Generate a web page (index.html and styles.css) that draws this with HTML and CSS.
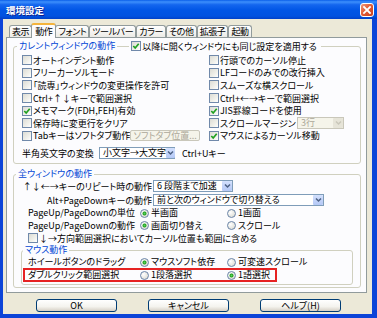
FILE: index.html
```html
<!DOCTYPE html>
<html lang="ja">

<head>
    <meta charset="UTF-8">
    <title>環境設定</title>
    <link rel="stylesheet" href="styles.css">
</head>

<body>
    <div class="window">
        <div class="titlebar">
            <span class="title">環境設定</span>
            <span class="close">
                <svg width="12" height="12" viewBox="0 0 12 12">
                    <path d="M3 3 L9 9 M9 3 L3 9" stroke="#fff" stroke-width="1.8" stroke-linecap="square" />
                </svg>
            </span>
        </div>

        <div class="frame">
            <!-- タブ -->
            <div class="tabs">
                <span class="tab">表示</span>
                <span class="tab active">動作</span>
                <span class="tab">フォント</span>
                <span class="tab">ツールバー</span>
                <span class="tab">カラー</span>
                <span class="tab">その他</span>
                <span class="tab">拡張子</span>
                <span class="tab">起動</span>
            </div>

            <div class="panel">
                <!-- カレントウィンドウの動作 -->
                <fieldset class="group current">
                    <legend>
                        <span>カレントウィンドウの動作</span>
                        <span class="legend-line"></span>
                        <label class="check legend-check"><span class="box on"><svg viewBox="0 0 8 8"><polyline points="1.3,4 3.2,6 6.7,1.8" /></svg></span>以降に開くウィンドウにも同じ設定を適用する</label>
                    </legend>

                    <div class="opts">
                        <label class="check"><span class="box"></span>オートインデント動作</label>
                        <label class="check"><span class="box"></span>行頭でのカーソル停止</label>

                        <label class="check"><span class="box"></span>フリーカーソルモード</label>
                        <label class="check"><span class="box"></span>LFコードのみでの改行挿入</label>

                        <label class="check"><span class="box"></span>「読専」ウィンドウの変更操作を許可</label>
                        <label class="check"><span class="box"></span>スムーズな横スクロール</label>

                        <label class="check"><span class="box"></span>Ctrl+↑↓キーで範囲選択</label>
                        <label class="check"><span class="box"></span>Ctrl+←→キーで範囲選択</label>

                        <label class="check"><span class="box on"><svg viewBox="0 0 8 8"><polyline points="1.3,4 3.2,6 6.7,1.8" /></svg></span>メモマーク(FDH,FEH)有効</label>
                        <label class="check"><span class="box on"><svg viewBox="0 0 8 8"><polyline points="1.3,4 3.2,6 6.7,1.8" /></svg></span>JIS罫線コードを使用</label>

                        <label class="check"><span class="box"></span>保存時に変更行をクリア</label>
                        <div class="cell">
                            <label class="check"><span class="box"></span>スクロールマージン</label>
                            <span class="select disabled margin-sel">3行<span class="arrow"><svg viewBox="0 0 9 8"><polyline points="2,2.5 4.5,5 7,2.5" /></svg></span></span>
                        </div>

                        <div class="cell">
                            <label class="check"><span class="box"></span>Tabキーはソフトタブ動作</label>
                            <span class="btn-small">ソフトタブ位置...</span>
                        </div>
                        <label class="check"><span class="box on"><svg viewBox="0 0 8 8"><polyline points="1.3,4 3.2,6 6.7,1.8" /></svg></span>マウスによるカーソル移動</label>
                    </div>

                    <div class="conv-row">
                        <span class="conv-label">半角英文字の変換</span>
                        <span class="select conv-sel">小文字→大文字<span class="arrow"><svg viewBox="0 0 9 8"><polyline points="2,2.5 4.5,5 7,2.5" /></svg></span></span>
                        <span class="conv-key">Ctrl+Uキー</span>
                    </div>
                </fieldset>

                <!-- 全ウィンドウの動作 -->
                <fieldset class="group all">
                    <legend>全ウィンドウの動作</legend>

                    <div class="kv">
                        <span class="kv-label">↑↓←→キーのリピート時の動作</span>
                        <span class="select repeat-sel">6 段階まで加速<span class="arrow"><svg viewBox="0 0 9 8"><polyline points="2,2.5 4.5,5 7,2.5" /></svg></span></span>

                        <span class="kv-label">Alt+PageDownキーの動作</span>
                        <span class="select alt-sel">前と次のウィンドウで切り替える<span class="arrow"><svg viewBox="0 0 9 8"><polyline points="2,2.5 4.5,5 7,2.5" /></svg></span></span>
                    </div>

                    <div class="radios indent">
                        <span>PageUp/PageDownの単位</span>
                        <label class="opt"><span class="radio on"></span>半画面</label>
                        <label class="opt"><span class="radio"></span>1画面</label>

                        <span>PageUp/PageDownの動作</span>
                        <label class="opt"><span class="radio on"></span>画面切り替え</label>
                        <label class="opt"><span class="radio"></span>スクロール</label>
                    </div>

                    <label class="check indent wide"><span class="box"></span>↓→方向範囲選択においてカーソル位置も範囲に含める</label>

                    <!-- マウス動作 -->
                    <fieldset class="group mouse">
                        <legend>マウス動作</legend>

                        <div class="radios wheel">
                            <span>ホイールボタンのドラッグ</span>
                            <label class="opt"><span class="radio on"></span>マウスソフト依存</label>
                            <label class="opt"><span class="radio"></span>可変速スクロール</label>
                        </div>

                        <div class="radios highlight">
                            <span>ダブルクリック範囲選択</span>
                            <label class="opt"><span class="radio"></span>1段落選択</label>
                            <label class="opt"><span class="radio on"></span>1語選択</label>
                        </div>
                    </fieldset>
                </fieldset>
            </div>

            <div class="buttons">
                <span class="btn">OK</span>
                <span class="btn">キャンセル</span>
                <span class="btn">ヘルプ(H)</span>
            </div>
        </div>
    </div>
</body>

</html>
```

FILE: styles.css
```css
* {
    box-sizing: border-box;
}

body {
    margin: 0;
    font-family: "Noto Sans CJK JP", "Noto Sans", sans-serif;
    font-size: 9px;
    font-feature-settings: "palt";
    color: #000;
    background: #fff;
}

.window {
    width: 377px;
    height: 318px;
    display: flex;
    flex-direction: column;
    background: #ece9d8;
}

/* タイトルバー */
.titlebar {
    height: 19px;
    flex: none;
    display: flex;
    align-items: center;
    justify-content: space-between;
    padding: 0 3px 0 6px;
    background: linear-gradient(to bottom, #0a5fe9 0%, #3d8ffc 10%, #1466ee 25%, #0055e5 55%, #0052e0 85%, #0040c8 100%);
}

.title {
    color: #fff;
    font-weight: bold;
    font-size: 9.5px;
    line-height: 12px;
    text-shadow: 1px 1px #0f1f8c;
}

.close {
    width: 14px;
    height: 14px;
    display: flex;
    align-items: center;
    justify-content: center;
    border: 1px solid #fff;
    border-radius: 3px;
    background: linear-gradient(135deg, #f09a7c 0%, #e25b36 45%, #c8401e 100%);
}

.frame {
    flex: 1;
    display: flex;
    flex-direction: column;
    padding-top: 4px;
    border: solid #0c44d8;
    border-width: 0 5px 4px 3px;
}

/* タブ */
.tabs {
    display: flex;
    align-items: flex-end;
    height: 15px;
    margin: 0 0 -1px 6px;
    position: relative;
    z-index: 1;
}

.tab {
    height: 12px;
    margin-bottom: 1px;
    padding: 0 2px;
    line-height: 11px;
    letter-spacing: -0.4px;
    border: 1px solid #919b9c;
    border-bottom: none;
    border-radius: 3px 3px 0 0;
    background: linear-gradient(to bottom, #ffffff, #ecebe6);
    white-space: nowrap;
}

.tab.active {
    height: 15px;
    margin: 0 -1px;
    padding: 1px 3px 0;
    border-top: 2px solid #f5b43c;
    background: #fcfcfe;
}

.panel {
    height: 256px;
    flex: none;
    margin: 0 5px 0 3px;
    padding: 2px 5px 0 6px;
    border: 1px solid #919b9c;
    background: #fcfcfe;
}

/* グループ */
.group {
    margin: 0;
    min-width: 0;
    border: 1px solid #d0d0bf;
    border-radius: 3px;
}

.group legend {
    margin-left: -5px;
    padding: 0 2px;
    line-height: 12px;
    color: #0046d5;
    white-space: nowrap;
}

.current {
    padding: 2px 7px 4px 8px;
}

.current legend {
    display: flex;
    align-items: center;
}

.legend-line {
    width: 12px;
    height: 1px;
    margin: 0 0 0 2px;
    background: #d0d0bf;
}

.legend-check {
    padding: 0 2px;
    color: #000;
    background: #fcfcfe;
}

.all {
    margin-top: 4px;
    padding: 0 7px 2px;
}

.mouse {
    padding: 0 6px 2px;
}

/* チェックボックス */
.check {
    display: flex;
    align-items: center;
    gap: 1px;
    white-space: nowrap;
    line-height: 11px;
}

.box {
    width: 10px;
    height: 10px;
    flex: none;
    border: 1px solid #7089aa;
    background: linear-gradient(135deg, #dcdcd5 0%, #f0f0ea 60%, #ffffff 100%);
}

.box svg {
    display: block;
    width: 8px;
    height: 8px;
}

.box svg polyline {
    fill: none;
    stroke: #21a121;
    stroke-width: 1.7;
}

/* ラジオボタン */
.opt {
    display: flex;
    align-items: center;
    gap: 2px;
    white-space: nowrap;
}

.radio {
    width: 9px;
    height: 9px;
    flex: none;
    border-radius: 50%;
    border: 1px solid #6a84a8;
    background: radial-gradient(circle at 35% 35%, #ffffff 0%, #e6e6df 60%, #d4d4cb 100%);
}

.radio.on {
    background: radial-gradient(circle, #5bd35b 0, #21a121 1.6px, transparent 2.4px),
        radial-gradient(circle at 35% 35%, #ffffff 0%, #e6e6df 60%, #d4d4cb 100%);
}

.opts {
    display: grid;
    grid-template-columns: 187px 1fr;
    grid-auto-rows: 12.6px;
    align-items: center;
}

.cell {
    display: flex;
    align-items: center;
}

/* セレクト */
.select {
    height: 12px;
    display: flex;
    align-items: center;
    justify-content: space-between;
    padding-left: 3px;
    border: 1px solid #7f9db9;
    background: #fff;
    line-height: 10px;
    white-space: nowrap;
}

.arrow {
    width: 10px;
    height: 10px;
    display: flex;
    align-items: center;
    justify-content: center;
    border-radius: 1px;
    background: linear-gradient(to bottom, #d3e0fd, #b4c8f6);
}

.arrow svg {
    width: 9px;
    height: 8px;
}

.arrow polyline {
    fill: none;
    stroke: #4d6185;
    stroke-width: 1.5;
}

.select.disabled {
    color: #aca899;
    border-color: #c9c7ba;
    background: #f5f4ea;
}

.select.disabled .arrow {
    background: #e6e4d8;
}

.select.disabled .arrow polyline {
    stroke: #c9c7ba;
}

.margin-sel {
    width: 47px;
    margin: 0 9px 0 auto;
}

.btn-small {
    width: 72px;
    height: 11px;
    margin: 0 9px 0 auto;
    line-height: 9px;
    text-align: center;
    color: #aca899;
    border: 1px solid #c9c7ba;
    border-radius: 2px;
    background: #f5f4ea;
    white-space: nowrap;
    overflow: hidden;
}

.conv-row {
    display: flex;
    align-items: center;
    height: 12px;
    margin-top: 5px;
    white-space: nowrap;
}

.conv-label {
    width: 77px;
}

.conv-sel {
    width: 76px;
}

.conv-key {
    margin-left: 7px;
}

/* 全ウィンドウ */
.kv {
    display: grid;
    grid-template-columns: 131px auto;
    grid-auto-rows: 12px;
    column-gap: 1px;
    row-gap: 2px;
    justify-content: start;
    align-items: center;
}

.kv-label {
    text-align: right;
    white-space: nowrap;
}

.repeat-sel {
    width: 80px;
}

.alt-sel {
    width: 171px;
}

.radios {
    display: grid;
    grid-template-columns: 112px 87px auto;
    grid-auto-rows: 12.5px;
    align-items: center;
    line-height: 10px;
    white-space: nowrap;
}

.indent {
    padding-left: 7px;
}

.radios.indent {
    margin-top: 1px;
}

.check.wide {
    height: 12px;
}

.radios.wheel {
    grid-auto-rows: 12px;
}

.radios.highlight {
    width: 254px;
    height: 14px;
    margin-left: -5px;
    padding-left: 3px;
    grid-auto-rows: 10px;
    border: 2px solid #e62222;
}

/* ボタン */
.buttons {
    display: flex;
    gap: 31px;
    margin: 6px 0 0 33px;
}

.btn {
    width: 81px;
    height: 13px;
    line-height: 11px;
    text-align: center;
    border: 1px solid #003c74;
    border-radius: 3px;
    background: linear-gradient(to bottom, #ffffff 0%, #f4f3ee 60%, #d6d0c5 100%);
}
```
